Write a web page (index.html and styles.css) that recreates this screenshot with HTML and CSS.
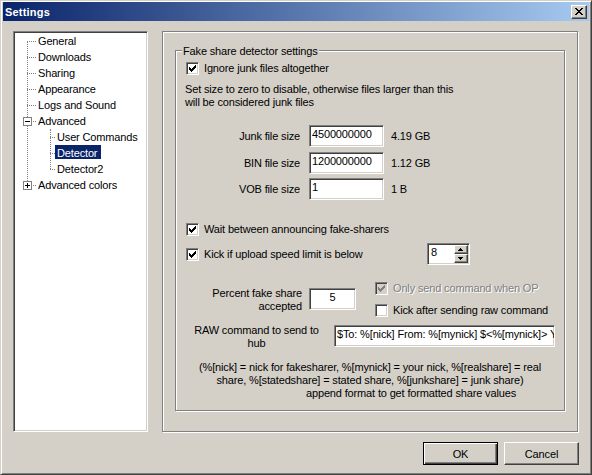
FILE: index.html
```html
<!DOCTYPE html>
<html>
<head>
<meta charset="utf-8">
<title>Settings</title>
<link rel="stylesheet" href="styles.css">
</head>
<body>
<div class="window">
  <div class="titlebar">
    <span class="title">Settings</span>
    <span class="close"><svg width="8" height="7" viewBox="0 0 8 7" shape-rendering="crispEdges"><path fill="#000" d="M0 0h2v1H0zM6 0h2v1H6zM1 1h2v1H1zM5 1h2v1H5zM2 2h4v1H2zM3 3h2v1H3zM2 4h4v1H2zM1 5h2v1H1zM5 5h2v1H5zM0 6h2v1H0zM6 6h2v1H6z"/></svg></span>
  </div>
  <div class="main">
    <div class="tree">
      <ul class="tv root">
        <li><div class="row"><span class="lbl">General</span></div></li>
        <li><div class="row"><span class="lbl">Downloads</span></div></li>
        <li><div class="row"><span class="lbl">Sharing</span></div></li>
        <li><div class="row"><span class="lbl">Appearance</span></div></li>
        <li><div class="row"><span class="lbl">Logs and Sound</span></div></li>
        <li><div class="row"><span class="tog"></span><span class="lbl">Advanced</span></div>
          <ul class="tv child">
            <li><div class="row"><span class="lbl">User Commands</span></div></li>
            <li><div class="row"><span class="lbl sel">Detector</span></div></li>
            <li><div class="row"><span class="lbl">Detector2</span></div></li>
          </ul>
        </li>
        <li><div class="row"><span class="tog plus"></span><span class="lbl">Advanced colors</span></div></li>
      </ul>
    </div>
    <div class="panel">
      <div class="group">
        <span class="legend">Fake share detector settings</span>
        <div class="chk first-chk"><span class="box"><svg width="7" height="7" viewBox="0 0 7 7" shape-rendering="crispEdges"><path d="M0 2h1v3H0zM1 3h1v3H1zM2 4h1v3H2zM3 3h1v3H3zM4 2h1v3H4zM5 1h1v3H5zM6 0h1v3H6z"/></svg></span><span class="txt">Ignore junk files altogether</span></div>
        <div class="note">Set size to zero to disable, otherwise files larger than this<br>will be considered junk files</div>
        <div class="field first-field"><span class="flabel">Junk file size</span><span class="edit">4500000000</span><span class="unit">4.19 GB</span></div>
        <div class="field"><span class="flabel">BIN file size</span><span class="edit">1200000000</span><span class="unit">1.12 GB</span></div>
        <div class="field vob"><span class="flabel">VOB file size</span><span class="edit">1</span><span class="unit">1 B</span></div>
        <div class="chk wait"><span class="box"><svg width="7" height="7" viewBox="0 0 7 7" shape-rendering="crispEdges"><path d="M0 2h1v3H0zM1 3h1v3H1zM2 4h1v3H2zM3 3h1v3H3zM4 2h1v3H4zM5 1h1v3H5zM6 0h1v3H6z"/></svg></span><span class="txt">Wait between announcing fake-sharers</span></div>
        <div class="kickrow">
          <div class="chk"><span class="box"><svg width="7" height="7" viewBox="0 0 7 7" shape-rendering="crispEdges"><path d="M0 2h1v3H0zM1 3h1v3H1zM2 4h1v3H2zM3 3h1v3H3zM4 2h1v3H4zM5 1h1v3H5zM6 0h1v3H6z"/></svg></span><span class="txt">Kick if upload speed limit is below</span></div>
          <div class="spin">
            <span class="spin-val">8</span>
            <div class="spin-btns">
              <span class="sb"><svg width="5" height="3" viewBox="0 0 5 3" shape-rendering="crispEdges"><path d="M2 0h1v1H2zM1 1h3v1H1zM0 2h5v1H0z"/></svg></span>
              <span class="sb"><svg width="5" height="3" viewBox="0 0 5 3" shape-rendering="crispEdges"><path d="M0 0h5v1H0zM1 1h3v1H1zM2 2h1v1H2z"/></svg></span>
            </div>
          </div>
        </div>
        <div class="percent">
          <span class="plabel">Percent fake share<br>accepted</span>
          <span class="edit center">5</span>
          <div class="opts">
            <div class="chk disabled"><span class="box"><svg width="7" height="7" viewBox="0 0 7 7" shape-rendering="crispEdges"><path d="M0 2h1v3H0zM1 3h1v3H1zM2 4h1v3H2zM3 3h1v3H3zM4 2h1v3H4zM5 1h1v3H5zM6 0h1v3H6z"/></svg></span><span class="txt">Only send command when OP</span></div>
            <div class="chk"><span class="box"></span><span class="txt">Kick after sending raw command</span></div>
          </div>
        </div>
        <div class="raw">
          <span class="rlabel">RAW command to send to<br>hub</span>
          <span class="edit wide">$To: %[nick] From: %[mynick] $&lt;%[mynick]&gt; You are being kicked</span>
        </div>
        <div class="help">
          <div>(%[nick] = nick for fakesharer, %[mynick] = your nick, %[realshare] = real</div>
          <div>share, %[statedshare] = stated share, %[junkshare] = junk share)</div>
          <div class="l3">append format to get formatted share values</div>
        </div>
      </div>
    </div>
  </div>
  <div class="buttons">
    <button class="btn default">OK</button>
    <button class="btn">Cancel</button>
  </div>
</div>
</body>
</html>
```

FILE: styles.css
```css
* { box-sizing: border-box; }
html, body { margin: 0; padding: 0; }
body {
  width: 592px;
  height: 475px;
  overflow: hidden;
  background: #D4D0C8;
  font-family: "Liberation Sans", Arial, sans-serif;
  font-size: 11px;
  letter-spacing: -0.15px;
  color: #000;
}
.window {
  width: 592px;
  height: 475px;
  background: #D4D0C8;
  border: 1px solid;
  border-color: #D4D0C8 #404040 #404040 #D4D0C8;
  box-shadow: inset 1px 1px 0 #fff, inset -1px -1px 0 #808080;
  padding: 1px 2px 2px 2px;
  display: flex;
  flex-direction: column;
}
.titlebar {
  height: 19px;
  flex: none;
  display: flex;
  justify-content: space-between;
  align-items: flex-start;
  background: linear-gradient(to right, #0A246A, #A6CAF0);
}
.title {
  color: #fff;
  font-weight: bold;
  letter-spacing: 0.2px;
  line-height: 18px;
  padding: 1px 0 0 2px;
}
.close {
  width: 16px;
  height: 14px;
  margin: 3px 2px 0 0;
  background: #D4D0C8;
  border: 1px solid;
  border-color: #fff #404040 #404040 #fff;
  box-shadow: inset -1px -1px 0 #808080;
  display: flex;
  align-items: center;
  justify-content: center;
}
.close svg { display: block; margin: 0 1px 1px 0; }

.main {
  display: flex;
  align-items: flex-start;
  height: 402px;
  margin-top: 10px;
  padding-left: 10px;
  flex: none;
}

/* tree */
.tree {
  width: 135px;
  height: 401px;
  flex: none;
  background: #fff;
  border: 1px solid;
  border-color: #808080 #fff #fff #808080;
  box-shadow: inset 1px 1px 0 #404040, inset -1px -1px 0 #D4D0C8;
  padding: 1px;
  overflow: hidden;
}
ul.tv {
  list-style: none;
  margin: 0;
  padding: 0 0 0 21px;
  position: relative;
}
ul.tv::before {
  content: "";
  position: absolute;
  left: 12px;
  top: 8px;
  bottom: 8px;
  border-left: 1px dotted #808080;
}
ul.tv.child { padding-left: 19px; }
ul.tv.child::before { left: 14px; top: 0; }
.row {
  height: 16px;
  position: relative;
  white-space: nowrap;
}
.row::before {
  content: "";
  position: absolute;
  top: 8px;
  left: -9px;
  width: 9px;
  border-top: 1px dotted #808080;
}
.child .row::before { left: -5px; width: 5px; }
.lbl {
  display: inline-block;
  vertical-align: top;
  height: 14px;
  line-height: 16px;
  padding: 0 2px;
}
.lbl.sel {
  background: #0A246A;
  color: #fff;
  padding-right: 4px;
}
.tog {
  position: absolute;
  left: -13px;
  top: 4px;
  width: 9px;
  height: 9px;
  border: 1px solid #808080;
  background: #fff;
  z-index: 1;
}
.tog::before {
  content: "";
  position: absolute;
  left: 1px;
  top: 3px;
  width: 5px;
  height: 1px;
  background: #000;
}
.tog.plus::after {
  content: "";
  position: absolute;
  left: 3px;
  top: 1px;
  width: 1px;
  height: 5px;
  background: #000;
}

/* right panel */
.panel {
  width: 416px;
  height: 401px;
  margin-left: 14px;
  flex: none;
  border: 1px solid #808080;
  box-shadow: inset 1px 1px 0 #fff, 1px 1px 0 #fff;
  padding: 18px 12px 0 12px;
}
.group {
  position: relative;
  border: 1px solid #808080;
  box-shadow: inset 1px 1px 0 #fff, 1px 1px 0 #fff;
  padding: 0 0 10px 0;
}
.legend {
  position: absolute;
  top: -6px;
  left: 6px;
  padding: 0 1px;
  line-height: 13px;
  background: #D4D0C8;
  white-space: nowrap;
}

/* checkbox */
.chk {
  display: flex;
  align-items: center;
  height: 13px;
  line-height: 13px;
  white-space: nowrap;
}
.box {
  width: 13px;
  height: 13px;
  flex: none;
  margin-right: 5px;
  background: #fff;
  border: 1px solid;
  border-color: #808080 #fff #fff #808080;
  box-shadow: inset 1px 1px 0 #404040, inset -1px -1px 0 #D4D0C8;
}
.box svg { display: block; margin: 2px; fill: #000; }
.chk.disabled .box { background: #D4D0C8; }
.chk.disabled .box svg { fill: #808080; }
.chk.disabled .txt { color: #808080; text-shadow: 1px 1px 0 #fff; }

.first-chk { margin: 11px 0 0 10px; }
.note { margin: 8px 0 0 9px; line-height: 13px; }

/* edit boxes */
.edit {
  display: block;
  height: 22px;
  flex: none;
  background: #fff;
  border: 1px solid;
  border-color: #808080 #fff #fff #808080;
  box-shadow: inset 1px 1px 0 #404040, inset -1px -1px 0 #D4D0C8;
  padding: 2px 2px 0 2px;
  line-height: 13px;
  white-space: nowrap;
  overflow: hidden;
}
.edit.center { text-align: center; }

.field {
  display: flex;
  align-items: center;
  height: 22px;
  margin-top: 5px;
}
.field.first-field { margin-top: 16px; }
.field.vob { margin-top: 4px; }
.flabel { width: 124px; text-align: right; flex: none; line-height: 13px; }
.field .edit { width: 75px; margin-left: 9px; }
.unit { margin-left: 7px; }

.chk.wait { margin: 23px 0 0 10px; }
.kickrow {
  display: flex;
  align-items: center;
  height: 22px;
  margin: 7px 0 0 10px;
}
.kickrow .chk { width: 241px; flex: none; }
.spin {
  width: 43px;
  height: 22px;
  display: flex;
  background: #fff;
  border: 1px solid;
  border-color: #808080 #fff #fff #808080;
  box-shadow: inset 1px 1px 0 #404040, inset -1px -1px 0 #D4D0C8;
  padding: 1px;
}
.spin-val {
  flex: 1;
  padding: 1px 0 0 2px;
  line-height: 13px;
}
.spin-btns {
  width: 14px;
  display: flex;
  flex-direction: column;
}
.sb {
  height: 9px;
  background: #D4D0C8;
  border: 1px solid;
  border-color: #fff #404040 #404040 #fff;
  box-shadow: inset -1px -1px 0 #808080;
  display: flex;
  align-items: center;
  justify-content: center;
}
.sb svg { display: block; fill: #000; margin-right: 1px; }

.percent {
  display: flex;
  align-items: flex-start;
  margin-top: 17px;
}
.plabel { width: 126px; flex: none; text-align: right; line-height: 13px; margin-top: 5px; }
.percent .edit { width: 47px; margin: 6px 0 0 7px; }
.opts {
  margin-left: 19px;
  display: flex;
  flex-direction: column;
  gap: 9px;
}

.raw {
  display: flex;
  align-items: flex-start;
  margin-top: 7px;
  padding-left: 10px;
}
.rlabel { width: 141px; flex: none; text-align: center; line-height: 13px; }
.raw .edit { width: 221px; margin: 1px 0 0 7px; }

.help {
  margin-top: 11px;
  text-align: center;
  line-height: 13px;
  white-space: nowrap;
}
.help .l3 { padding-left: 82px; }

/* buttons */
.buttons {
  display: flex;
  justify-content: flex-end;
  gap: 6px;
  margin-top: 9px;
  padding-right: 10px;
}
.btn {
  width: 75px;
  height: 23px;
  margin: 0;
  padding: 0;
  font: inherit;
  letter-spacing: inherit;
  color: #000;
  background: #D4D0C8;
  border: 1px solid;
  border-color: #fff #404040 #404040 #fff;
  box-shadow: inset -1px -1px 0 #808080;
  border-radius: 0;
}
.btn.default {
  border: 1px solid #000;
  box-shadow: inset 1px 1px 0 #fff, inset -1px -1px 0 #404040, inset -2px -2px 0 #808080;
}
```
